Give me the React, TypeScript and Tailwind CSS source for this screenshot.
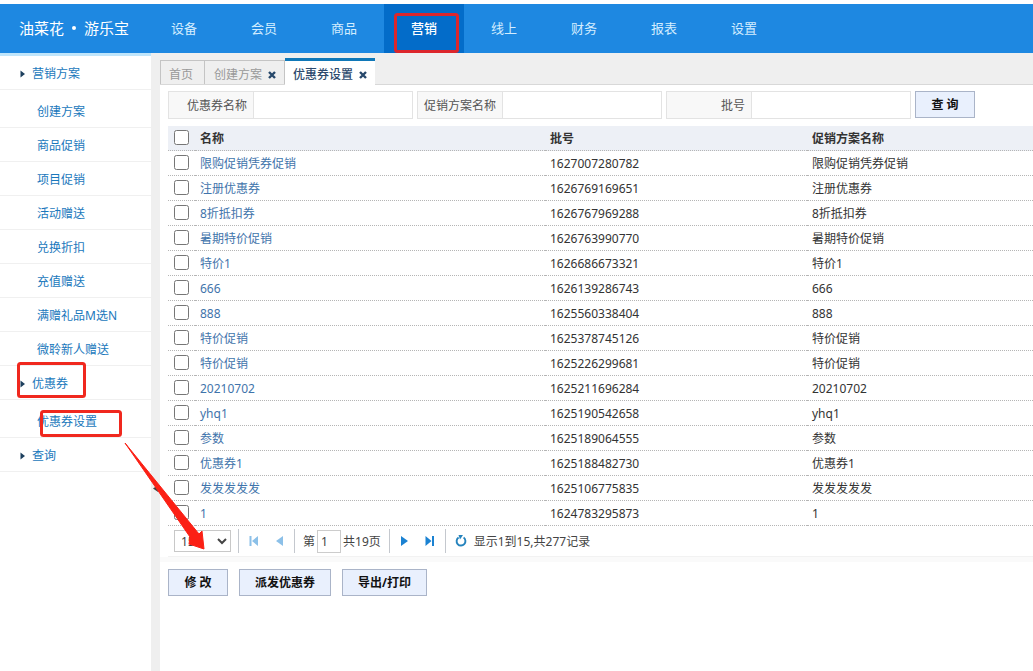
import { useState } from "react";
import { clsx } from "clsx";

const NAV = ["设备", "会员", "商品", "营销", "线上", "财务", "报表", "设置"];

const MENU = [
  {
    title: "营销方案",
    items: ["创建方案", "商品促销", "项目促销", "活动赠送", "兑换折扣", "充值赠送", "满赠礼品M选N", "微聆新人赠送"],
  },
  { title: "优惠券", items: ["优惠券设置"] },
  { title: "查询", items: [] },
];

const FIELDS = [
  { id: "coupon", label: "优惠券名称" },
  { id: "plan", label: "促销方案名称" },
  { id: "batch", label: "批号" },
];

const ROWS = [
  ["限购促销凭券促销", "1627007280782"],
  ["注册优惠券", "1626769169651"],
  ["8折抵扣券", "1626767969288"],
  ["暑期特价促销", "1626763990770"],
  ["特价1", "1626686673321"],
  ["666", "1626139286743"],
  ["888", "1625560338404"],
  ["特价促销", "1625378745126"],
  ["特价促销", "1625226299681"],
  ["20210702", "1625211696284"],
  ["yhq1", "1625190542658"],
  ["参数", "1625189064555"],
  ["优惠券1", "1625188482730"],
  ["发发发发发", "1625106775835"],
  ["1", "1624783295873"],
];

function Header() {
  return (
    <header className="mt-1 flex h-[49px] shrink-0 bg-[#1e88e1] text-white">
      <div className="flex w-36 shrink-0 items-center gap-2 pb-0.5 pl-[19px] text-[15px]">
        <span>油菜花</span>
        <span className="size-1 rounded-full bg-white" />
        <span>游乐宝</span>
      </div>
      <nav className="flex text-[13px]">
        {NAV.map((name) => (
          <a
            key={name}
            href="#"
            className={clsx(
              "flex w-20 items-center justify-center pb-0.5",
              name === "营销" ? "bg-[#036cc9] font-medium text-white" : "text-[#d3edff]",
            )}
          >
            {name}
          </a>
        ))}
      </nav>
    </header>
  );
}

function Sidebar() {
  return (
    <aside className="w-[151px] shrink-0 border-t-[3px] border-[#bfe5fb] bg-white text-[#1a78bc]">
      {MENU.map((group) => (
        <div key={group.title}>
          <a href="#" className="flex h-[34px] items-center gap-[7px] border-b border-[#f0f0f0] pl-5 pt-0.5">
            <svg width="5" height="8" viewBox="0 0 5 8">
              <path d="M0.5 0.5 5 4 0.5 7.5z" fill="#1d3f5e" />
            </svg>
            {group.title}
          </a>
          {group.items.length > 0 && (
            <ul className="pt-1">
              {group.items.map((item) => (
                <li key={item}>
                  <a href="#" className="flex h-[34px] items-center border-b border-[#f0f0f0] pl-[37px] pt-0.5">
                    {item}
                  </a>
                </li>
              ))}
            </ul>
          )}
        </div>
      ))}
    </aside>
  );
}

function CloseButton({ label }: { label: string }) {
  return (
    <button type="button" aria-label={label}>
      <svg width="8" height="8" viewBox="0 0 8 8">
        <path d="M1 1 7 7M7 1 1 7" stroke="#27486b" strokeWidth="2.4" />
      </svg>
    </button>
  );
}

function Tabs() {
  return (
    <div className="flex h-8 items-end border-b border-[#d8d8d8] bg-[#efefef] text-[#999]">
      <div className="flex h-6 w-[45px] items-center border border-b-0 border-[#c4c4c4] pl-2 pt-1">
        <a href="#">首页</a>
      </div>
      <div className="flex h-6 w-20 items-center gap-1.5 border-t border-r border-[#c4c4c4] pl-[9px] pt-1">
        <a href="#">创建方案</a>
        <CloseButton label="关闭创建方案" />
      </div>
      <div className="-mb-px flex h-[27px] w-[90px] items-center gap-1.5 border-t-[3px] border-[#1078b8] bg-white pl-2 pt-1 font-medium text-[#2d4a6e]">
        <a href="#">优惠券设置</a>
        <CloseButton label="关闭优惠券设置" />
      </div>
    </div>
  );
}

function SearchForm() {
  return (
    <form className="flex gap-1 pt-1.5 text-[#555]" onSubmit={(e) => e.preventDefault()}>
      {FIELDS.map((f) => (
        <div key={f.id} className="flex h-7 border border-[#e3e3e3]">
          <label
            htmlFor={f.id}
            className="flex w-[85px] items-center justify-end border-r border-[#e3e3e3] bg-[#f8f8f8] pr-1.5 pt-0.5"
          >
            {f.label}
          </label>
          <input id={f.id} type="text" className="w-[158px] px-1 outline-none" />
        </div>
      ))}
      <button
        type="submit"
        className="h-[27px] w-[60px] border border-[#aab4c8] bg-[#e9f0fd] font-bold text-[#111]"
      >
        查 询
      </button>
    </form>
  );
}

function CouponTable() {
  const [checked, setChecked] = useState<number[]>([]);
  const all = checked.length === ROWS.length;

  const toggle = (i: number) =>
    setChecked((c) => (c.includes(i) ? c.filter((n) => n !== i) : [...c, i]));

  const line = "h-[25px] border-b border-dotted border-[#b5b5b5]";
  const boxCell = clsx(line, "p-0 pb-px pl-[5px]");
  const cell = clsx(line, "p-0 pl-[5px] pt-0.5");

  return (
    <table className="mt-[7px] w-full table-fixed border-separate border-spacing-0 text-left text-[#333]">
      <colgroup>
        <col className="w-[27px]" />
        <col className="w-[350px]" />
        <col className="w-[262px]" />
        <col />
      </colgroup>
      <thead className="bg-[#edf0f6]">
        <tr>
          <th className={boxCell}>
            <input
              type="checkbox"
              aria-label="全选"
              className="ml-px block size-[15px]"
              checked={all}
              onChange={() => setChecked(all ? [] : ROWS.map((_, i) => i))}
            />
          </th>
          <th className={cell}>名称</th>
          <th className={cell}>批号</th>
          <th className={cell}>促销方案名称</th>
        </tr>
      </thead>
      <tbody>
        {ROWS.map(([name, batch], i) => (
          <tr key={batch}>
            <td className={boxCell}>
              <input
                type="checkbox"
                aria-label={name}
                className="ml-px block size-[15px]"
                checked={checked.includes(i)}
                onChange={() => toggle(i)}
              />
            </td>
            <td className={cell}>
              <a href="#" className="text-[#3f74ab]">
                {name}
              </a>
            </td>
            <td className={cell}>{batch}</td>
            <td className={cell}>{name}</td>
          </tr>
        ))}
      </tbody>
    </table>
  );
}

function Divider() {
  return <span className="h-6 w-px bg-[#c4c8ce]" />;
}

function Pager() {
  return (
    <div className="flex h-[31px] items-center border-b border-[#f2f2f2] pl-1.5 text-[#444]">
      <select
        aria-label="每页条数"
        defaultValue="15"
        className="mr-[7px] h-[22px] w-[57px] border border-[#c8c8c8] bg-white pl-0.5"
      >
        <option>15</option>
        <option>30</option>
        <option>50</option>
      </select>
      <Divider />
      <button type="button" aria-label="首页" className="ml-[10px]">
        <svg width="10" height="10" viewBox="0 0 10 10" fill="#8cc0e8">
          <path d="M0.5 0h2v10h-2zM9 0v10L3 5z" />
        </svg>
      </button>
      <button type="button" aria-label="上一页" className="ml-[17px] mr-[10px]">
        <svg width="8" height="10" viewBox="0 0 8 10" fill="#8cc0e8">
          <path d="M7 0v10L0 5z" />
        </svg>
      </button>
      <Divider />
      <label htmlFor="page" className="ml-2 mr-0.5 pt-0.5">
        第
      </label>
      <input id="page" defaultValue="1" className="h-[23px] w-6 border border-[#ccc] pl-[3px] outline-none" />
      <span className="ml-0.5 mr-2 pt-0.5">共19页</span>
      <Divider />
      <button type="button" aria-label="下一页" className="ml-[10px]">
        <svg width="8" height="10" viewBox="0 0 8 10" fill="#1b82d2">
          <path d="M1 0v10L8 5z" />
        </svg>
      </button>
      <button type="button" aria-label="末页" className="ml-[17px] mr-[10px]">
        <svg width="10" height="10" viewBox="0 0 10 10" fill="#1b82d2">
          <path d="M7 0h2v10H7zM0.5 0v10l6-5z" />
        </svg>
      </button>
      <Divider />
      <button type="button" aria-label="刷新" className="ml-[9px] mr-[7px]">
        <svg width="12" height="12" viewBox="0 0 12 12">
          <path d="M8.6 2.6A4.4 4.4 0 1 1 3.6 2.5" fill="none" stroke="#2583bd" strokeWidth="1.9" />
          <path d="M3.5 0h4.5L5 4.5z" fill="#2583bd" />
        </svg>
      </button>
      <span className="pt-0.5">显示1到15,共277记录</span>
    </div>
  );
}

/* Red marks that walk the reader through the steps. */
function Annotations() {
  return (
    <svg className="pointer-events-none absolute left-0 top-0" width="480" height="560" fill="none">
      <g stroke="#f0281e" strokeWidth="3">
        <rect x="395.5" y="14.5" width="62" height="37" rx="2" stroke="#dc262c" />
        <rect x="18.5" y="363.5" width="66" height="33" rx="2" />
        <rect x="41.5" y="411.5" width="79" height="24" rx="2" />
      </g>
      <path d="M125 443 199 534 202 531 204 549 189 544 190 537z" fill="#fb2015" stroke="#fb2015" strokeLinejoin="round" />
    </svg>
  );
}

export default function App() {
  return (
    <div className="relative flex min-h-screen flex-col overflow-hidden bg-white font-['Noto_Sans','Noto_Sans_CJK_SC',sans-serif] text-[12px] leading-4">
      <Header />
      <div className="flex grow">
        <Sidebar />
        <div className="relative w-[9px] shrink-0 bg-[#efefef]">
          <svg className="absolute left-0.5 top-[432px]" width="5" height="7" viewBox="0 0 5 7">
            <path d="M5 0v7L0 3.5z" fill="#444" />
          </svg>
        </div>
        <main className="min-w-0 grow">
          <Tabs />
          <div className="pl-2">
            <SearchForm />
            <CouponTable />
            <Pager />
          </div>
          <div className="h-[5px] bg-[#fafafa]" />
          <div className="flex gap-[11px] pl-2 pt-[7px]">
            {["修 改", "派发优惠券", "导出/打印"].map((text) => (
              <button
                key={text}
                type="button"
                className={clsx(
                  "h-[27px] border border-[#aab4c8] bg-[#e9f0fd] font-bold text-[#111]",
                  text === "修 改" ? "w-[60px]" : "px-[15px]",
                )}
              >
                {text}
              </button>
            ))}
          </div>
        </main>
      </div>
      <Annotations />
    </div>
  );
}
